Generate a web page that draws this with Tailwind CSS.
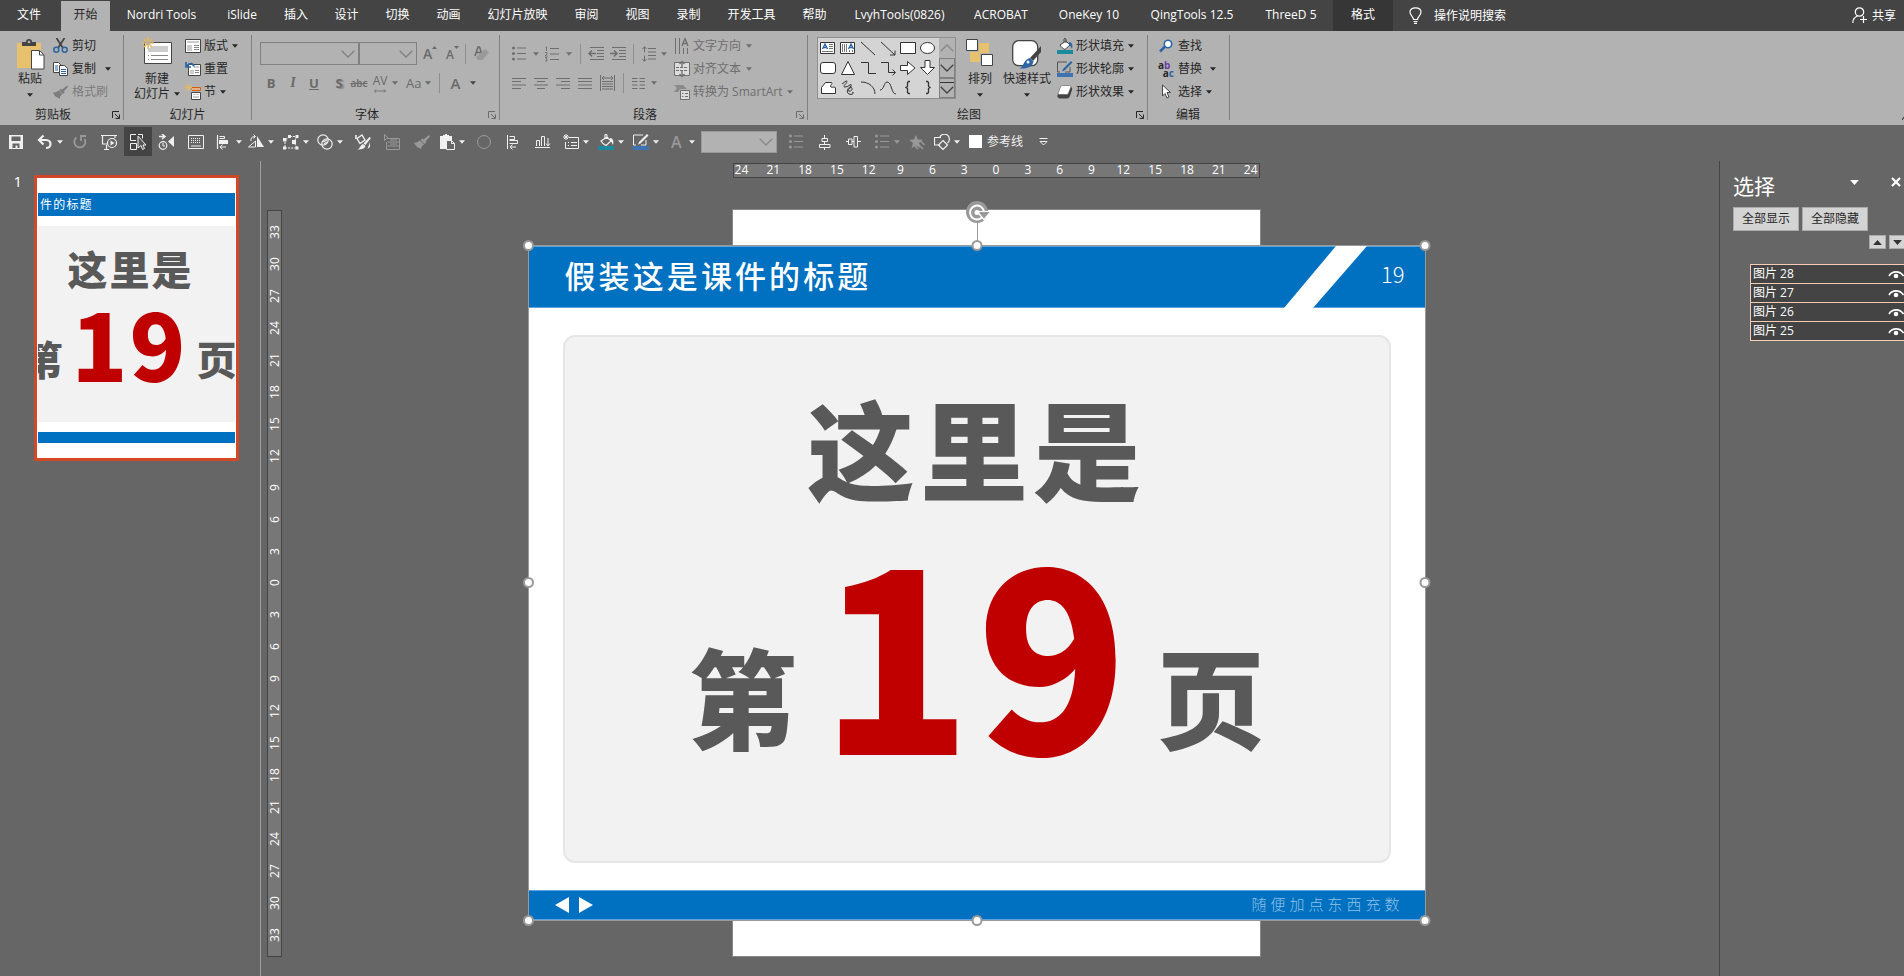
<!DOCTYPE html>
<html lang="zh-CN">
<head>
<meta charset="utf-8">
<title>演示文稿</title>
<script src="https://cdn.jsdelivr.net/npm/@tailwindcss/browser@4"></script>
</head>
<body class="flex h-screen flex-col overflow-hidden bg-[#666666] font-['Open_Sans','Noto_Sans_CJK_SC',sans-serif] text-xs leading-none text-[#262626]">

<svg class="hidden" aria-hidden="true">
  <symbol id="down" viewBox="0 0 7 4"><path d="M0 0h7L3.500 4z" fill="currentColor"/></symbol>
  <symbol id="chev" viewBox="0 0 14 8"><path d="M.7 .7L7 7L13.300 .7" fill="none" stroke="currentColor" stroke-width="1.300"/></symbol>
  <symbol id="launch" viewBox="0 0 8 8"><path d="M.5 7V.5H7M3 3l4 4M7.500 3.500v4h-4" fill="none" stroke="currentColor"/></symbol>
  <symbol id="bul" viewBox="0 0 14 15"><path d="M5 2h9M5 7.500h9M5 13h9" stroke="currentColor" stroke-width="1.200"/><g fill="currentColor"><circle cx="1.500" cy="2" r="1.500"/><circle cx="1.500" cy="7.500" r="1.500"/><circle cx="1.500" cy="13" r="1.500"/></g></symbol>
  <symbol id="brush" viewBox="0 0 16 14"><path d="M15 0l1 1.500-4.500 5-2-2zM8.500 3.500l4 4-2 1.500-4-4zM6 5.500L10 9.500C8 11 7 12 7.500 14 4 13 1 11 0 7.500c2 .5 4-.5 6-2z" fill="currentColor"/></symbol>
  <symbol id="pastes" viewBox="0 0 16 16"><path d="M1 2h3V1h2V0h2v1h2v1h3v4H9v9H1z" fill="currentColor"/><path d="M7.500 6.500h5l3 3v6h-8zM12.500 6.500v3h3" fill="#666" stroke="currentColor"/></symbol>
  <symbol id="eye" viewBox="0 0 16 9"><path d="M1 6C4 .5 12 .5 15.500 6" fill="none" stroke="currentColor" stroke-width="1.600"/><circle cx="8" cy="6" r="2.300" fill="currentColor"/></symbol>
</svg>

<!-- Ribbon tabs -->
<header class="flex h-[31px] shrink-0 bg-[#444444] text-white">
  <nav class="flex" aria-label="功能区选项卡">
    <button class="w-[58px] pb-px">文件</button>
    <button class="mt-px ml-[3px] w-[49px] bg-[#b2b2b2] pb-[2px] text-[#262626]">开始</button>
    <button class="w-[103px] pb-px">Nordri Tools</button>
    <button class="w-[58px] pb-px">iSlide</button>
    <button class="w-[50px] pb-px">插入</button>
    <button class="w-[51px] pb-px">设计</button>
    <button class="w-[51px] pb-px">切换</button>
    <button class="w-[51px] pb-px">动画</button>
    <button class="w-[87px] pb-px">幻灯片放映</button>
    <button class="w-[51px] pb-px">审阅</button>
    <button class="w-[51px] pb-px">视图</button>
    <button class="w-[51px] pb-px">录制</button>
    <button class="w-[75px] pb-px">开发工具</button>
    <button class="w-[51px] pb-px">帮助</button>
    <button class="w-[119px] pb-px">LvyhTools(0826)</button>
    <button class="w-[84px] pb-px">ACROBAT</button>
    <button class="w-[92px] pb-px">OneKey 10</button>
    <button class="w-[114px] pb-px">QingTools 12.5</button>
    <button class="w-[84px] pb-px">ThreeD 5</button>
    <button class="w-[60px] bg-[#363636] pb-px">格式</button>
  </nav>
  <button class="ml-4 flex items-center gap-3">
    <svg class="h-[17px] w-[13px]" viewBox="0 0 13 17" fill="none" stroke="#fff" stroke-width="1.200"><path d="M4.500 12.500c0-3-3.500-4-3.500-7.500C1 2.500 3 .8 6.500 .8S12 2.500 12 5c0 3.500-3.500 4.500-3.500 7.500zM4.500 14.500h4M5 16.300h3"/></svg>
    操作说明搜索
  </button>
  <button class="mr-2 ml-auto flex items-center gap-1">
    <svg class="h-[17px] w-4" viewBox="0 0 16 17" fill="none" stroke="#fff" stroke-width="1.200"><circle cx="7.500" cy="5" r="4.200"/><path d="M.8 16c0-4 2-6 4.700-7M11.500 9v7M8 12.500h7"/></svg>
    共享
  </button>
</header>

<!-- Ribbon -->
<section class="flex h-[94px] shrink-0 bg-[#b2b2b2] pt-1 pb-[5px]" aria-label="功能区">

  <div class="flex w-[124px] flex-col border-r border-[#808080]">
    <div class="flex h-[72px] shrink-0">
      <button class="ml-[15px] flex w-[30px] flex-col items-center pt-1">
        <svg class="h-[31px] w-[30px]" viewBox="0 0 30 31"><path d="M2 4h24v25H2z" fill="#e8c16e"/><path d="M7 3h4a3 3 0 0 1 6 0h4v4H7z" fill="#444"/><circle cx="14" cy="3" r="1.300" fill="#b2b2b2"/><path d="M16.500 11.500h8l4.500 4.500v14H16.500z" fill="#fff" stroke="#444"/><path d="M24.500 11.500V16H29" fill="none" stroke="#444"/></svg>
        <span class="mt-[3px]">粘贴</span>
        <svg class="mt-2 h-1 w-[6px]"><use href="#down"/></svg>
      </button>
      <div class="-mt-px ml-2">
        <button class="flex h-[23px] items-center gap-1">
          <svg class="h-[15px] w-[15px]" viewBox="0 0 15 15" fill="none"><path d="M3.500 0L10 10M11.500 0L5 10" stroke="#444" stroke-width="1.800"/><circle cx="3.300" cy="11.700" r="2.500" stroke="#2b65a5" stroke-width="1.500"/><circle cx="11.700" cy="11.700" r="2.500" stroke="#2b65a5" stroke-width="1.500"/></svg>剪切
        </button>
        <button class="flex h-[23px] items-center gap-1">
          <svg class="h-[14px] w-[15px]" viewBox="0 0 15 14"><path d="M.5 .5h5l2.500 2.500v7.500H.5z" fill="#fff" stroke="#444"/><path d="M2 4h3M2 6h3M2 8h3" stroke="#2b65a5"/><path d="M6.500 3.500h5l3 3v7h-8z" fill="#fff" stroke="#444"/><path d="M8 7.500h5M8 9.500h5M8 11.500h5" stroke="#2b65a5"/></svg>复制
          <svg class="ml-[5px] h-1 w-[6px]"><use href="#down"/></svg>
        </button>
        <button class="flex h-[23px] items-center gap-1 text-[#7c7c7c]">
          <svg class="h-[14px] w-[15px]"><use href="#brush"/></svg>格式刷
        </button>
      </div>
    </div>
    <div class="flex h-[15px] shrink-0 items-center"><span class="flex-1 text-center">剪贴板</span><svg class="mr-[3px] ml-[6px] h-2 w-2"><use href="#launch"/></svg></div>
  </div>

  <div class="flex w-[128px] flex-col border-r border-[#808080]">
    <div class="flex h-[72px] shrink-0">
      <button class="ml-[10px] flex w-[46px] flex-col items-center pt-[2px]">
        <svg class="h-[28px] w-[31px]" viewBox="0 0 31 28"><path d="M2.500 5.500h27v21h-27z" fill="#fff" stroke="#444"/><path d="M11 9h15v6H6v-3z" fill="#ccc"/><path d="M6 18.500h1M9 18.500h17M6 22.500h1M9 22.500h17" stroke="#888"/><path d="M6 0v12M0 6h12M2 2l8 8M10 2l-8 8" stroke="#e8b95c" stroke-width="1.600"/><circle cx="6" cy="6" r="2" fill="#b2b2b2"/></svg>
        <span class="mt-2">新建</span>
        <span class="mt-[3px] flex items-center gap-1 whitespace-nowrap">幻灯片<svg class="h-1 w-[6px]"><use href="#down"/></svg></span>
      </button>
      <div class="-mt-px ml-[5px]">
        <button class="flex h-[23px] items-center gap-[3px]">
          <svg class="h-[14px] w-4" viewBox="0 0 16 14"><path d="M.5 .5h15v13H.5z" fill="#fff" stroke="#444"/><path d="M2 2h12v2H2zM2 6h5v6H2z" fill="#ccc"/><path d="M9 6.500h5M9 8.500h5M9 10.500h5" stroke="#888"/></svg>版式
          <svg class="ml-px h-1 w-[6px]"><use href="#down"/></svg>
        </button>
        <button class="flex h-[23px] items-center gap-[3px]">
          <svg class="h-[14px] w-4" viewBox="0 0 16 14"><path d="M3.500 2.500h12v11h-12z" fill="#fff" stroke="#444"/><path d="M9 4h5v2H9zM5 8h4v4H5z" fill="#ccc"/><path d="M10 8.500h4M10 10.500h4" stroke="#888"/><path d="M9 4.500C8 1 4 .5 2 4M1 0v5h5" fill="none" stroke="#2b65a5" stroke-width="1.700"/></svg>重置
        </button>
        <button class="flex h-[23px] items-center gap-[3px]">
          <svg class="h-4 w-4" viewBox="0 0 16 16"><path d="M7 3.500h8.500v3H7M15 5H6" fill="#fff" stroke="#d0600f"/><path d="M6.500 8.500h9v7h-9z" fill="#fff" stroke="#444"/><path d="M8 10h6v1H8zM8 12h6v2H8z" fill="#ccc"/><path d="M3 0v7M0 3.500h7M.5 1l5 5M5.500 1l-5 5" stroke="#e8b95c"/></svg>节
          <svg class="ml-px h-1 w-[6px]"><use href="#down"/></svg>
        </button>
      </div>
    </div>
    <div class="flex h-[15px] shrink-0 items-center justify-center">幻灯片</div>
  </div>

  <div class="flex w-[248px] flex-col border-r border-[#808080] text-[#6a6a6a]">
    <div class="flex h-[72px] shrink-0 flex-col gap-2 pt-[7px]">
      <div class="flex h-[23px] items-center pl-2">
        <label class="relative flex h-[23px] w-[99px]"><select aria-label="字体" disabled class="h-full w-full appearance-none border border-[#808080]"><option></option></select><svg class="absolute top-2 right-1 h-2 w-[14px] text-[#808080]"><use href="#chev"/></svg></label>
        <label class="relative flex h-[23px] w-[58px]"><select aria-label="字号" disabled class="h-full w-full appearance-none border border-[#808080]"><option></option></select><svg class="absolute top-2 right-1 h-2 w-[14px] text-[#808080]"><use href="#chev"/></svg></label>
        <button class="ml-[6px] flex w-4 items-center" aria-label="增大字号"><span class="text-sm font-semibold">A</span><svg class="mb-3 h-[3px] w-[5px] rotate-180"><use href="#down"/></svg></button>
        <button class="ml-[7px] flex w-4 items-center" aria-label="减小字号"><span class="pt-[2px] text-xs font-semibold">A</span><svg class="mb-3 h-[3px] w-[5px]"><use href="#down"/></svg></button>
        <i class="ml-[3px] h-5 w-px bg-[#8f8f8f]"></i>
        <button class="ml-2" aria-label="清除格式"><svg class="h-4 w-[15px]" viewBox="0 0 15 16"><path d="M1 10L4 1h1.500l2 6M2.500 6.500h4" fill="none" stroke="#6a6a6a" stroke-width="1.500"/><path d="M11 3l4 3.500-6.500 7.500H4l-2-2.500z" fill="#999"/></svg></button>
      </div>
      <div class="flex h-5 items-center pl-[11px] text-[13px]">
        <button class="w-4 font-bold">B</button>
        <button class="ml-[6px] w-4 font-['Liberation_Serif',serif] text-sm font-bold italic">I</button>
        <button class="ml-[5px] w-4 font-bold underline">U</button>
        <button class="ml-[9px] w-4 font-bold text-shadow-[2px_1px_1px_#8a8a8a]">S</button>
        <button class="ml-[2px] w-5 text-[10px] font-semibold line-through">abc</button>
        <button class="ml-[3px] flex items-center gap-1" aria-label="字符间距"><span class="flex flex-col items-center text-xs">AV<svg class="h-1 w-4" viewBox="0 0 16 5"><path d="M1 2.500h14M3 .5l-2 2 2 2M13 .5l2 2-2 2" fill="none" stroke="currentColor"/></svg></span><svg class="h-1 w-[6px]"><use href="#down"/></svg></button>
        <button class="ml-2 flex items-center gap-1">Aa<svg class="h-1 w-[6px]"><use href="#down"/></svg></button>
        <i class="ml-2 h-5 w-px bg-[#8f8f8f]"></i>
        <button class="ml-[10px] flex items-center gap-[10px] text-[15px] font-semibold">A<svg class="h-1 w-[6px] text-[#444]"><use href="#down"/></svg></button>
      </div>
    </div>
    <div class="flex h-[15px] shrink-0 items-center"><span class="flex-1 text-center text-[#262626]">字体</span><svg class="mr-[3px] ml-[6px] h-2 w-2"><use href="#launch"/></svg></div>
  </div>

  <div class="flex w-[308px] flex-col border-r border-[#808080] text-[#6e6e6e]">
    <div class="flex h-[72px] shrink-0">
      <div class="flex w-[174px] flex-col gap-2 pt-[7px] pl-3">
        <div class="flex h-[23px] items-center">
          <button class="flex items-center gap-[7px]" aria-label="项目符号"><svg class="h-[15px] w-[14px]"><use href="#bul"/></svg><svg class="h-1 w-[6px]"><use href="#down"/></svg></button>
          <button class="ml-[6px] flex items-center gap-[7px]" aria-label="编号"><svg class="h-4 w-[14px]" viewBox="0 0 14 16"><path d="M5 2.500h9M5 8h9M5 13.500h9" stroke="currentColor"/><path d="M.5 1h1v4M0 6.500h2v1.500l-2 2h2.500M0 11.500h2l-1 1.500 1 .5v1.500H0" fill="none" stroke="currentColor" stroke-width=".9"/></svg><svg class="h-1 w-[6px]"><use href="#down"/></svg></button>
          <i class="ml-2 h-5 w-px bg-[#8f8f8f]"></i>
          <button class="ml-[7px]" aria-label="减少缩进"><svg class="h-[13px] w-4" viewBox="0 0 16 13"><path d="M2 .5h14M9 3.500h7M9 6.500h7M9 9.500h7M2 12.500h14" stroke="currentColor"/><path d="M1 6.500h7M4 3.500l-3 3 3 3" fill="none" stroke="currentColor" stroke-width="1.500"/></svg></button>
          <button class="ml-[6px]" aria-label="增加缩进"><svg class="h-[13px] w-4" viewBox="0 0 16 13"><path d="M2 .5h14M9 3.500h7M9 6.500h7M9 9.500h7M2 12.500h14" stroke="currentColor"/><path d="M0 6.500h7M4 3.500l3 3-3 3" fill="none" stroke="currentColor" stroke-width="1.500"/></svg></button>
          <i class="ml-[7px] h-5 w-px bg-[#8f8f8f]"></i>
          <button class="ml-2 flex items-center gap-[5px]" aria-label="行距"><svg class="h-4 w-[14px]" viewBox="0 0 14 16"><path d="M6 2.500h8M6 6h8M6 9.500h8M6 13h8" stroke="currentColor"/><path d="M2.500 1v5.500M2.500 9.500V15M.5 3l2-2.300L4.500 3M.5 13l2 2.300 2-2.300" fill="none" stroke="currentColor"/></svg><svg class="h-1 w-[6px]"><use href="#down"/></svg></button>
        </div>
        <div class="flex h-5 items-center gap-2">
          <button aria-label="左对齐"><svg class="h-[11px] w-[14px]" viewBox="0 0 14 11"><path d="M0 .5h14M0 3.500h9M0 7h14M0 10.500h9" stroke="currentColor"/></svg></button>
          <button aria-label="居中"><svg class="h-[11px] w-[14px]" viewBox="0 0 14 11"><path d="M0 .5h14M3 3.500h8M0 7h14M3 10.500h8" stroke="currentColor"/></svg></button>
          <button aria-label="右对齐"><svg class="h-[11px] w-[14px]" viewBox="0 0 14 11"><path d="M0 .5h14M5 3.500h9M0 7h14M5 10.500h9" stroke="currentColor"/></svg></button>
          <button aria-label="两端对齐"><svg class="h-[11px] w-[14px]" viewBox="0 0 14 11"><path d="M0 .5h14M0 3.500h14M0 7h14M0 10.500h14" stroke="currentColor"/></svg></button>
          <button aria-label="分散对齐"><svg class="h-4 w-[15px]" viewBox="0 0 15 16"><path d="M.5 0v16M14.500 0v16M2 6.500h11M2 9h11M2 11.500h11M2 14h11" stroke="currentColor"/><path d="M2 3h11M4 1L2 3l2 2M11 1l2 2-2 2" fill="none" stroke="currentColor"/></svg></button>
          <i class="h-5 w-px bg-[#8f8f8f]"></i>
          <button class="flex items-center gap-[6px]" aria-label="分栏"><svg class="h-[11px] w-[13px]" viewBox="0 0 13 11"><path d="M0 .5h5.500M0 3.500h5.500M0 7h5.500M0 10.500h5.500M7.500 .5H13M7.500 3.500H13M7.500 7H13M7.500 10.500H13" stroke="currentColor"/></svg><svg class="h-1 w-[6px]"><use href="#down"/></svg></button>
        </div>
      </div>
      <div class="-mt-px">
        <button class="flex h-[23px] items-center gap-[3px]">
          <svg class="h-4 w-4" viewBox="0 0 16 16"><path d="M1.500 0v16M5.500 0v16M9.500 10v6M13.500 10v6" stroke="currentColor"/><path d="M8 8l3-7.500L14 8M9 5.500h4" fill="none" stroke="currentColor" stroke-width="1.300"/></svg>文字方向<svg class="ml-[2px] h-1 w-[6px]"><use href="#down"/></svg>
        </button>
        <button class="flex h-[23px] items-center gap-[3px]">
          <svg class="h-4 w-4" viewBox="0 0 16 16"><path d="M.5 1.500h15v13H.5z" fill="#ddd" stroke="currentColor"/><path d="M2 6.500h12M2 9.500h12" stroke="currentColor" stroke-dasharray="3 1"/><path d="M8 0v6M5.500 3L8 .5 10.500 3M8 10v6M5.500 13L8 15.500l2.500-2.500" fill="none" stroke="currentColor" stroke-width="1.300"/></svg>对齐文本<svg class="ml-[2px] h-1 w-[6px]"><use href="#down"/></svg>
        </button>
        <button class="flex h-[23px] items-center gap-[3px]">
          <svg class="h-4 w-4" viewBox="0 0 16 16"><path d="M0 1h9l4 4H6L4 8 0 8l3-4z" fill="#8a8a8a"/><path d="M6.500 6.500h9v9h-9z" fill="#ddd" stroke="currentColor"/><path d="M8 9.500h1.500M11 9.500h3M8 12.500h1.500M11 12.500h3" stroke="currentColor"/></svg>转换为 SmartArt<svg class="ml-[2px] h-1 w-[6px]"><use href="#down"/></svg>
        </button>
      </div>
    </div>
    <div class="flex h-[15px] shrink-0 items-center"><span class="flex-1 text-center text-[#262626]">段落</span><svg class="mr-[3px] ml-[6px] h-2 w-2"><use href="#launch"/></svg></div>
  </div>

  <div class="flex w-[340px] flex-col border-r border-[#808080]">
    <div class="flex h-[72px] shrink-0">
      <div class="mt-[2px] ml-[9px] flex h-[62px] w-[139px] border border-[#8e8e8e] bg-[#d4d4d4]">
        <svg class="h-[60px] w-[121px]" viewBox="0 0 121 60" fill="none" stroke="#333">
          <path d="M2.500 4.500h14v11h-14zM22.500 4.500h14v11h-14z" fill="#fff"/>
          <path d="M4.500 11L7 6l2.500 5M5.500 9.500h3M30.500 11L33 6l2.500 5M31.500 9.500h3" stroke="#2b65a5" stroke-width="1.300"/>
          <path d="M11 6.500h4M11 8.500h4M11 10.500h4M4 13.500h11M24.500 6v8M26.500 6v8M28.500 6v8M31.500 12v2M34.500 12v2" stroke="#777"/>
          <path d="M43 4l14 13M63 4l14 13M77 12.500V17h-5"/>
          <path d="M82.500 4.500h15v11h-15z" fill="#fff"/><ellipse cx="109.500" cy="10" rx="7" ry="5.500" fill="#fff"/>
          <rect x="2.500" y="24.500" width="15" height="11" rx="2.500" fill="#fff"/><path d="M30 23.500l6.500 13h-13z" fill="#fff"/>
          <path d="M43 24.500h7.500v11H58M63 24.500h7.500v10H77M74.500 31.500l3 3-3 3"/>
          <path d="M82.500 27.500h7v-4l7.500 6.500-7.500 6.500v-4h-7zM107 22.500h5v7h4.500l-7 7-7-7h4.500z" fill="#fff"/>
          <path d="M3.500 55.500v-6l4-5h6c2 1-2.500 3-.5 4.500 2 1 4-1 4.500 1v5.500z" fill="#fff"/>
          <path d="M24 46l4-3c4 0-5 6-1 6s7-5 6-1-5 4-2 5 4-3 2-4-6 5-2 7 6-3 3-1"/>
          <path d="M43 44c8 0 14 5 14 12M62 52c4 0 4-8 7-8 5 0 4 12 9 12"/>
          <path d="M92 43.500h-1.500l-1 1v4l-1.500 1 1.500 1v4l1 1H92M108 43.500h1.500l1 1v4l1.500 1-1.500 1v4l-1 1H108" stroke-width="1.300"/>
        </svg>
        <div class="flex w-4 flex-col text-[#444]">
          <button class="grid h-5 w-4 place-items-center bg-[#b2b2b2] text-[#888]" aria-label="向上滚动"><svg class="h-2 w-[14px] rotate-180"><use href="#chev"/></svg></button>
          <button class="grid h-5 w-4 place-items-center border border-[#808080] bg-[#b2b2b2]" aria-label="向下滚动"><svg class="h-2 w-[14px]"><use href="#chev"/></svg></button>
          <button class="flex h-5 w-4 flex-col items-center gap-[3px] border border-[#808080] bg-[#b2b2b2] pt-[3px]" aria-label="其他"><i class="h-px w-[14px] bg-[#333]"></i><svg class="h-2 w-[14px]"><use href="#chev"/></svg></button>
        </div>
      </div>
      <button class="ml-[10px] flex w-7 flex-col items-center pt-1">
        <svg class="h-[27px] w-7" viewBox="0 0 28 27"><path d="M13 4h10v10H13zM4 13h10v10H4z" fill="#e8c16e"/><path d="M.5 .5h11v11H.5zM15.500 15.500h11v11h-11z" fill="#fff" stroke="#444"/></svg>
        <span class="mt-[7px]">排列</span>
        <svg class="mt-2 h-1 w-[6px]"><use href="#down"/></svg>
      </button>
      <button class="ml-2 flex w-[50px] flex-col items-center pt-[5px]">
        <svg class="h-[29px] w-[30px]" viewBox="0 0 30 29"><rect x=".7" y=".7" width="25" height="25" rx="6" fill="#fff" stroke="#444" stroke-width="1.300"/><path d="M29 6v6l-8 9-3-3z" fill="#444"/><path d="M18 18l3.500 3.500c-1 5-5 7.500-14 7 4-1.500 4-9 10.500-10.500z" fill="#2b65a5"/><circle cx="16" cy="22" r="1.500" fill="#fff"/></svg>
        <span class="mt-1 whitespace-nowrap">快速样式</span>
        <svg class="mt-2 h-1 w-[6px]"><use href="#down"/></svg>
      </button>
      <div class="-mt-px ml-[5px]">
        <button class="flex h-[23px] items-center gap-[3px]"><svg class="h-4 w-4" viewBox="0 0 16 16"><path d="M0 12h16v4H0z" fill="#1a8a9c"/><path d="M3 7l6-4 4 4-5 4.500c-2-1-4-2.500-5-4.500z" fill="#fff" stroke="#444"/><path d="M7 4V1c1-1.500 2-.5 2 1v3" fill="none" stroke="#444"/><path d="M12 4c3 0 4 3 3 7-1-2-1-3-3-4z" fill="#2b65a5"/></svg>形状填充<svg class="ml-px h-1 w-[6px]"><use href="#down"/></svg></button>
        <button class="flex h-[23px] items-center gap-[3px]"><svg class="h-4 w-4" viewBox="0 0 16 16"><path d="M0 12h16v4H0z" fill="#3f73b3"/><path d="M10 1H.5v10H3M13 6v5H8" fill="none" stroke="#555"/><path d="M14 0l1.500 1.500-8 8-2.500 1 1-2.500z" fill="#2b65a5"/></svg>形状轮廓<svg class="ml-px h-1 w-[6px]"><use href="#down"/></svg></button>
        <button class="flex h-[23px] items-center gap-[3px]"><svg class="h-4 w-4" viewBox="0 0 16 16"><path d="M5 3h8c2 0 2.500 1 2 3l-2 6c-.5 1.500-1.500 2.500-3 2.500H3c-2 0-3-2-2.500-3.500z" fill="#444"/><path d="M5.500 1.500h7c1.200 0 1.700 1 1.200 2L11.500 9c-.4 1-1 1.500-2 1.500h-7c-1.200 0-1.700-1-1.200-2L3.500 3c.4-1 1-1.500 2-1.500z" fill="#fff" stroke="#555" stroke-width=".6"/></svg>形状效果<svg class="ml-px h-1 w-[6px]"><use href="#down"/></svg></button>
      </div>
    </div>
    <div class="flex h-[15px] shrink-0 items-center"><span class="flex-1 text-center">绘图</span><svg class="mr-[3px] ml-[6px] h-2 w-2"><use href="#launch"/></svg></div>
  </div>

  <div class="flex w-[82px] flex-col border-r border-[#808080]">
    <div class="-mt-px h-[73px] shrink-0 pl-[10px]">
      <button class="flex h-[23px] items-center gap-1"><svg class="h-[14px] w-4" viewBox="0 0 16 14"><circle cx="10" cy="5" r="3.700" fill="#fff" stroke="#2b65a5" stroke-width="1.600"/><path d="M7 7.500L2 12.500" stroke="#2b65a5" stroke-width="2.500"/></svg>查找</button>
      <button class="flex h-[23px] items-center gap-1"><span class="flex h-4 w-4 flex-col text-[10px] leading-[8px] font-bold"><span class="text-left">a<span class="text-[#6b3fa0]">b</span></span><span class="text-right">a<span class="text-[#2b65a5]">c</span></span></span>替换<svg class="ml-1 h-1 w-[6px]"><use href="#down"/></svg></button>
      <button class="flex h-[23px] items-center gap-1"><svg class="h-[15px] w-4" viewBox="0 0 16 15"><path d="M4.500 1v11l2.500-2.500 2 4.500 2-1-2-4.500h3.500z" fill="#fff" stroke="#444"/></svg>选择<svg class="h-1 w-[6px]"><use href="#down"/></svg></button>
    </div>
    <div class="flex h-[15px] shrink-0 items-center pl-7">编辑</div>
  </div>

  <button class="mt-auto ml-auto" aria-label="折叠功能区"><svg class="h-[3px] w-[2px]" viewBox="0 0 2 3"><path d="M0 3l2-3" stroke="#222"/></svg></button>
</section>

<!-- Quick access toolbar -->
<section class="flex h-[35px] shrink-0 items-center pb-[2px] pl-2 text-[#f0f0f0]" aria-label="快速访问工具栏">
  <button aria-label="保存"><svg class="h-4 w-4" viewBox="0 0 16 16"><path d="M1 1h14v14H1z" fill="currentColor"/><path d="M3.500 2.500h9v4.500h-9zM4.500 9.500h7V14h-2v-2.500h-2V14h-3z" fill="#666"/></svg></button>
  <button class="ml-[13px] flex items-center gap-1" aria-label="撤消"><svg class="h-4 w-4" viewBox="0 0 16 16"><path d="M2 6h7c6 0 6 8 0 8M6.500 1.500L2 6l4.500 4.500" fill="none" stroke="currentColor" stroke-width="2.200"/></svg><svg class="h-1 w-[6px]"><use href="#down"/></svg></button>
  <button class="ml-[9px] text-[#9a9a9a]" aria-label="恢复"><svg class="h-4 w-4" viewBox="0 0 16 16"><path d="M4.500 3.500a5.500 5.500 0 1 0 8 1.500M9 7V2h5" fill="none" stroke="currentColor" stroke-width="1.800"/></svg></button>
  <button class="ml-[13px]" aria-label="从头放映"><svg class="h-4 w-4" viewBox="0 0 16 16"><path d="M0 1.500h16M1.500 2v8H6M14 2v2M5.500 11v4M3 15.500h5" fill="none" stroke="currentColor" stroke-width="1.200"/><circle cx="11" cy="9" r="4.500" fill="#666" stroke="currentColor" stroke-width="1.200"/><path d="M9.500 6.500v5l4-2.500z" fill="currentColor"/></svg></button>
  <button class="ml-[7px] grid h-[29px] w-7 place-items-center bg-[#444444]" aria-label="选择窗格"><svg class="h-4 w-4" viewBox="0 0 16 16" fill="none"><path d="M6 .5H.5v6H6M6.500 9.500h-6v6h6zM8 .5h4.500v4" stroke="currentColor"/><path d="M8 2v12l3-2.500 1.500 4 2-1-1.500-3.500h3z" fill="#555" stroke="currentColor"/></svg></button>
  <button class="ml-[6px]" aria-label="动画窗格"><svg class="h-4 w-4" viewBox="0 0 16 16"><path d="M16 2v11l-6-5.500z" fill="currentColor"/><path d="M1 2.500h5M4 0l3 2.500L4 5" fill="none" stroke="currentColor" stroke-width="1.600"/><circle cx="5" cy="11.500" r="3.800" fill="none" stroke="currentColor" stroke-width="1.200"/><path d="M5 9v3h2" fill="none" stroke="currentColor"/></svg></button>
  <button class="ml-[14px]" aria-label="备注"><svg class="h-4 w-4" viewBox="0 0 16 16"><path d="M.5 1.500h15v13H.5zM3 12h10" fill="none" stroke="currentColor"/><path d="M3 4.500h10M3 6.500h10M3 8.500h10" stroke="currentColor" stroke-dasharray="1 1"/></svg></button>
  <button class="ml-3 flex items-center gap-1" aria-label="对齐"><svg class="h-4 w-4" viewBox="0 0 16 16"><path d="M1.500 1v14" stroke="currentColor" stroke-width="1.200"/><path d="M3 6h9v4H3z" fill="currentColor"/><path d="M3.500 2.500h5v2h-5M10 13H4M6.500 10.500L4 13l2.500 2.500" fill="none" stroke="currentColor"/></svg><svg class="h-1 w-[6px]"><use href="#down"/></svg></button>
  <button class="ml-[6px] flex items-center gap-1" aria-label="旋转"><svg class="h-4 w-4" viewBox="0 0 16 16"><path d="M9 2v11h7z" fill="currentColor"/><path d="M7.500 7v6H.5zM3 7C2.500 4 4 2.500 7 2.500M5.500 .5l2 2-2 2" fill="none" stroke="currentColor"/></svg><svg class="h-1 w-[6px]"><use href="#down"/></svg></button>
  <button class="ml-[9px] flex items-center gap-1" aria-label="编辑顶点"><svg class="h-4 w-4" viewBox="0 0 16 16"><path d="M2 6L7 2.500h7L11 8l3 6H2z" fill="none" stroke="currentColor" stroke-dasharray="2 1"/><path d="M0 4h3.500v3.500H0zM5 1h3v3H5zM12.500 1h3v3h-3zM9 6h4v4H9zM0 12.500h3v3H0zM12.500 12.500h3v3h-3z" fill="currentColor"/></svg><svg class="h-1 w-[6px]"><use href="#down"/></svg></button>
  <button class="ml-2 flex items-center gap-1" aria-label="合并形状"><svg class="h-4 w-4" viewBox="0 0 16 16" fill="none" stroke="currentColor" stroke-width="1.200"><circle cx="6" cy="6" r="5.200"/><circle cx="10" cy="10" r="5.200"/><path d="M6 8l4-2M7 10l3-2"/></svg><svg class="h-1 w-[6px]"><use href="#down"/></svg></button>
  <button class="ml-3" aria-label="格式填充"><svg class="h-4 w-4" viewBox="0 0 16 16"><path d="M2 4.500l5-3.500 3 5-5 3.500z" fill="none" stroke="currentColor" stroke-width="1.400"/><path d="M1 1v4" stroke="currentColor" stroke-width="1.600"/><path d="M16 4l-5.500 7-2-1.500L14.500 3zM8 10l2.500 2c-1 3-4 3.700-8 3.500 3-1 2.500-4.500 5.500-5.500zM15 8v5l-2.500 2z" fill="currentColor"/></svg></button>
  <button class="ml-[13px] text-[#999]" aria-label="列表"><svg class="h-4 w-4" viewBox="0 0 16 16" fill="none" stroke="currentColor"><path d="M3 4.500h12.500v11H2.500V8M3.500 8h12M3.500 12h12M.5 .5v6l3-3zM6 6h7M6 10h7"/></svg></button>
  <button class="ml-[14px] text-[#999]" aria-label="格式刷"><svg class="h-4 w-4"><use href="#brush"/></svg></button>
  <button class="ml-[9px] flex items-center gap-1" aria-label="粘贴"><svg class="h-4 w-4"><use href="#pastes"/></svg><svg class="h-1 w-[6px]"><use href="#down"/></svg></button>
  <button class="ml-[11px] text-[#999]" aria-label="圆形"><svg class="h-4 w-4" viewBox="0 0 16 16"><circle cx="8" cy="8" r="6.500" fill="none" stroke="currentColor"/></svg></button>
  <button class="ml-[14px]" aria-label="左对齐"><svg class="h-4 w-4" viewBox="0 0 16 16" fill="none" stroke="currentColor"><path d="M1.500 1v14M3.500 2.500h5v3h-5M3.500 6.500h8v3h-8M10 13H4M6.500 10.500L4 13l2.500 2.500"/></svg></button>
  <button class="ml-[13px]" aria-label="底端对齐"><svg class="h-4 w-4" viewBox="0 0 16 16" fill="none" stroke="currentColor"><path d="M0 13.500h15M1.500 12V6.500h3V12M6.500 12V2.500h3V12M13 4v8M11 9.500l2 2.500 2-2.500"/></svg></button>
  <button class="ml-3 flex items-center gap-1" aria-label="新建文本"><svg class="h-4 w-4" viewBox="0 0 16 16" fill="none" stroke="currentColor"><path d="M6 3.500h9.500v11h-13V8M5 8.500h1M8 8.500h6M5 11.500h1M8 11.500h6M3 0v6M0 3h6M1 1l4 4M5 1L1 5"/></svg><svg class="h-1 w-[6px]"><use href="#down"/></svg></button>
  <button class="ml-[9px] flex items-center gap-1" aria-label="填充"><svg class="h-4 w-4" viewBox="0 0 16 16"><path d="M0 12h16v4H0z" fill="#1a8a9c"/><path d="M3 7l6-4 4 4-5 4.500c-2-1-4-2.500-5-4.500zM7 4V1c1-1.500 2-.5 2 1v3" fill="none" stroke="currentColor" stroke-width="1.200"/><path d="M12 4c3 0 4 3 3 7-1-2-1-3-3-4z" fill="currentColor"/></svg><svg class="h-1 w-[6px]"><use href="#down"/></svg></button>
  <button class="ml-[9px] flex items-center gap-1" aria-label="轮廓"><svg class="h-4 w-4" viewBox="0 0 16 16"><path d="M0 12h16v4H0z" fill="#3f73b3"/><path d="M10 1H.5v10H3M13 6v5H8" fill="none" stroke="currentColor"/><path d="M14 0l1.500 1.500-8 8-2.500 1 1-2.500z" fill="currentColor"/></svg><svg class="h-1 w-[6px]"><use href="#down"/></svg></button>
  <button class="ml-3 flex items-center gap-1" aria-label="字体颜色"><span class="w-[14px] text-left text-base font-semibold text-[#999]">A</span><svg class="h-1 w-[6px]"><use href="#down"/></svg></button>
  <label class="relative ml-[6px] flex h-[22px] w-[76px]"><select aria-label="样式" disabled class="h-full w-full appearance-none border border-[#999] bg-[#b2b2b2]"><option></option></select><svg class="absolute top-[7px] right-1 h-2 w-[14px] text-[#888]"><use href="#chev"/></svg></label>
  <button class="ml-[11px] text-[#999]" aria-label="项目符号"><svg class="h-[15px] w-4"><use href="#bul"/></svg></button>
  <button class="ml-[13px]" aria-label="水平居中"><svg class="h-4 w-4" viewBox="0 0 16 16" fill="none" stroke="currentColor"><path d="M7.500 1v3M7.500 8v3M7.500 14v2M5 4.500h5.500v3H5zM2.500 10.500h10.500v3H2.500z"/></svg></button>
  <button class="ml-[13px]" aria-label="垂直居中"><svg class="h-4 w-4" viewBox="0 0 16 16" fill="none" stroke="currentColor"><path d="M0 7.500h2.500M6 7.500h2M11.500 7.500H15M2.500 5h3.500v5.500H2.500zM8 2.500h3.500v10.500H8z"/></svg></button>
  <button class="ml-3 flex items-center gap-1 text-[#999]" aria-label="项目符号库"><svg class="h-[15px] w-4"><use href="#bul"/></svg><svg class="h-1 w-[6px]"><use href="#down"/></svg></button>
  <button class="ml-[9px] text-[#999]" aria-label="动画"><svg class="h-4 w-4" viewBox="0 0 16 16"><path d="M7 1l1.800 4.500 5 .3L10 9l1.200 5L7 11.500 2.500 14l1.500-5L0 5.800l5-.3z" fill="currentColor"/><path d="M8 9l6 6M10.500 6l5 5M6 12l3 3" stroke="currentColor" stroke-width="1.500"/></svg></button>
  <button class="ml-[9px] flex items-center gap-1" aria-label="形状"><svg class="h-4 w-4" viewBox="0 0 16 16" fill="none" stroke="currentColor" stroke-width="1.200"><path d="M6 11H.5V3.500H7"/><path d="M5.500 4a5 5 0 1 1 8 5"/><path d="M9 6.500l4.500 4.500L9 15.500 4.500 11z"/></svg><svg class="h-1 w-[6px]"><use href="#down"/></svg></button>
  <label class="ml-[9px] flex items-center gap-[5px]"><input type="checkbox" class="h-[13px] w-[13px] appearance-none bg-white">参考线</label>
  <button class="ml-4" aria-label="自定义快速访问工具栏"><svg class="h-2 w-[9px]" viewBox="0 0 9 8"><path d="M.5 .5h8M1 3.500h7L4.500 7z" fill="none" stroke="currentColor"/></svg></button>
</section>

<!-- Workspace -->
<main class="flex min-h-0 flex-1">

  <aside class="mt-px flex w-[261px] shrink-0 items-start border-r border-[#a0a0a0] pt-[14px] text-white" aria-label="幻灯片缩略图">
    <span class="w-[34px] pr-3 text-right text-[15px] leading-3">1</span>
    <button class="flex h-[286px] w-[205px] flex-col border-[3px] border-[#d24726] bg-white px-px pt-[15px]" aria-label="幻灯片 1">
      <span class="flex h-[250px] w-full flex-col overflow-hidden">
        <span class="flex h-[23px] items-center bg-[#0070c0] pb-[2px] pl-[2px] font-['Noto_Sans_CJK_SC',sans-serif] text-xs tracking-widest">件的标题</span>
        <span class="mt-[10px] flex h-[196px] flex-col items-center bg-[#f2f2f2] pr-[14px] font-['Noto_Sans_CJK_SC',sans-serif] text-[40px] font-black text-[#595959]">
          <span class="pt-[22px] pl-[2px] tracking-[2px]">这里是</span>
          <span class="mt-2 flex items-end gap-[9px] whitespace-nowrap"><span class="pb-[10px]">第</span><b class="text-[92px] leading-none font-black tracking-[2px] text-[#c00000]">19</b><span class="pb-[10px]">页</span></span>
        </span>
        <span class="mt-[10px] h-[11px] bg-[#0070c0]"></span>
      </span>
    </button>
  </aside>

  <section class="flex min-w-0 flex-1 pl-[6px] text-white" aria-label="编辑区">
    <div class="mt-[50px] flex h-[747px] w-[15px] shrink-0 flex-col border border-[#444] bg-[#777777] py-[5px]">
      <span class="grid flex-1 rotate-180 place-items-center [writing-mode:vertical-rl]">33</span>
      <span class="grid flex-1 rotate-180 place-items-center [writing-mode:vertical-rl]">30</span>
      <span class="grid flex-1 rotate-180 place-items-center [writing-mode:vertical-rl]">27</span>
      <span class="grid flex-1 rotate-180 place-items-center [writing-mode:vertical-rl]">24</span>
      <span class="grid flex-1 rotate-180 place-items-center [writing-mode:vertical-rl]">21</span>
      <span class="grid flex-1 rotate-180 place-items-center [writing-mode:vertical-rl]">18</span>
      <span class="grid flex-1 rotate-180 place-items-center [writing-mode:vertical-rl]">15</span>
      <span class="grid flex-1 rotate-180 place-items-center [writing-mode:vertical-rl]">12</span>
      <span class="grid flex-1 rotate-180 place-items-center [writing-mode:vertical-rl]">9</span>
      <span class="grid flex-1 rotate-180 place-items-center [writing-mode:vertical-rl]">6</span>
      <span class="grid flex-1 rotate-180 place-items-center [writing-mode:vertical-rl]">3</span>
      <span class="grid flex-1 rotate-180 place-items-center [writing-mode:vertical-rl]">0</span>
      <span class="grid flex-1 rotate-180 place-items-center [writing-mode:vertical-rl]">3</span>
      <span class="grid flex-1 rotate-180 place-items-center [writing-mode:vertical-rl]">6</span>
      <span class="grid flex-1 rotate-180 place-items-center [writing-mode:vertical-rl]">9</span>
      <span class="grid flex-1 rotate-180 place-items-center [writing-mode:vertical-rl]">12</span>
      <span class="grid flex-1 rotate-180 place-items-center [writing-mode:vertical-rl]">15</span>
      <span class="grid flex-1 rotate-180 place-items-center [writing-mode:vertical-rl]">18</span>
      <span class="grid flex-1 rotate-180 place-items-center [writing-mode:vertical-rl]">21</span>
      <span class="grid flex-1 rotate-180 place-items-center [writing-mode:vertical-rl]">24</span>
      <span class="grid flex-1 rotate-180 place-items-center [writing-mode:vertical-rl]">27</span>
      <span class="grid flex-1 rotate-180 place-items-center [writing-mode:vertical-rl]">30</span>
      <span class="grid flex-1 rotate-180 place-items-center [writing-mode:vertical-rl]">33</span>
    </div>

    <div class="flex flex-1 flex-col items-center pt-[3px] pr-[9px]">
      <div class="h-[15px] w-[527px] border border-[#444] bg-[#777777]">
        <div class="-mx-2 flex h-full items-center pb-px text-center">
          <span class="flex-1">24</span><span class="flex-1">21</span><span class="flex-1">18</span><span class="flex-1">15</span><span class="flex-1">12</span><span class="flex-1">9</span><span class="flex-1">6</span><span class="flex-1">3</span><span class="flex-1">0</span><span class="flex-1">3</span><span class="flex-1">6</span><span class="flex-1">9</span><span class="flex-1">12</span><span class="flex-1">15</span><span class="flex-1">18</span><span class="flex-1">21</span><span class="flex-1">24</span>
        </div>
      </div>

      <!-- Slide with the selected picture lying over it -->
      <div class="relative mt-[31px] h-[748px] w-[529px] border border-[#888] bg-white">
        <div class="absolute top-[35px] -left-[205px] flex h-[676px] w-[898px] flex-col border border-[#999] bg-white font-['Noto_Sans_CJK_SC',sans-serif]">
          <div class="flex h-[62px] shrink-0 items-center border-y border-[#5ba3da] bg-[#0070c0] pl-9">
            <h1 class="pb-[6px] text-[31px] font-medium tracking-widest">假装这是课件的标题</h1>
            <svg class="ml-auto h-[62px] w-[83px]" viewBox="0 0 83 62"><path d="M52 0h31L29 62H0z" fill="#fff"/></svg>
            <span class="mr-5 ml-[14px] pb-2 text-[22px] font-light">19</span>
          </div>
          <div class="mx-[34px] mt-[27px] flex h-[528px] flex-col items-center rounded-xl border-2 border-[#e6e6e6] bg-[#f2f2f2] text-[108px] font-black text-[#595959]">
            <p class="pt-[55px] tracking-[5px]">这里是</p>
            <p class="mt-[23px] flex items-end gap-6 whitespace-nowrap"><span class="pb-[23px]">第</span><b class="text-[248px] leading-none font-black tracking-[5px] text-[#c00000]">19</b><span class="pb-[23px]">页</span></p>
          </div>
          <div class="mt-auto flex h-[30px] shrink-0 items-center border-y border-[#5ba3da] bg-[#0070c0] pr-[21px] pl-[26px]">
            <svg class="h-4 w-[38px]" viewBox="0 0 38 16" fill="#fff"><path d="M14 0v16L0 8zM24 0l14 8-14 8z"/></svg>
            <span class="ml-auto pb-1 text-[15px] font-light tracking-[4px] text-[#8fc1e8]">随便加点东西充数</span>
          </div>
        </div>
        <!-- Selection handles -->
        <svg class="absolute top-0 -left-[215px] h-[730px] w-[918px] overflow-visible" viewBox="0 0 918 730" fill="none" stroke="#999">
          <path d="M459.500 10v22"/>
          <circle cx="459" cy="2" r="11" fill="#999" stroke="none"/>
          <path d="M464 7.500A7 7 0 1 1 466 2" stroke="#fff" stroke-width="2"/><path d="M459 1.500h14l-7 8z" fill="#999" stroke="#fff" stroke-width="1.200"/><circle cx="459" cy="2.500" r="2.500" fill="#fff" stroke="none"/>
          <g fill="#fff" stroke-width="2"><circle cx="10.500" cy="35.500" r="4.500"/><circle cx="459" cy="35.500" r="4.500"/><circle cx="907" cy="35.500" r="4.500"/><circle cx="10.500" cy="372.500" r="4.500"/><circle cx="907" cy="372.500" r="4.500"/><circle cx="10.500" cy="710.500" r="4.500"/><circle cx="459" cy="710.500" r="4.500"/><circle cx="907" cy="710.500" r="4.500"/></g>
        </svg>
      </div>
    </div>
  </section>

  <aside class="mt-px w-[185px] shrink-0 overflow-hidden border-l border-[#444] pl-[13px] text-white" aria-label="选择窗格">
    <div class="flex h-[46px] items-center pt-1">
      <h2 class="text-[21px]">选择</h2>
      <button class="mb-2 ml-auto" aria-label="任务窗格选项"><svg class="h-[5px] w-[9px]"><use href="#down"/></svg></button>
      <button class="mr-[3px] mb-2 ml-8" aria-label="关闭"><svg class="h-[10px] w-[10px]" viewBox="0 0 10 10"><path d="M1 1l8 8M9 1L1 9" stroke="#fff" stroke-width="2.200"/></svg></button>
    </div>
    <div class="flex gap-[3px] text-[#262626]">
      <button class="h-6 w-[66px] border border-[#ababab] bg-[#d4d4d4]">全部显示</button>
      <button class="h-6 w-[66px] border border-[#ababab] bg-[#d4d4d4]">全部隐藏</button>
    </div>
    <div class="mt-1 ml-[136px] flex w-[40px] gap-[3px] text-[#333]">
      <button class="grid h-[14px] w-[17px] shrink-0 place-items-center border border-[#ababab] bg-[#d4d4d4]" aria-label="上移一层"><svg class="h-[5px] w-[9px] rotate-180"><use href="#down"/></svg></button>
      <button class="grid h-[14px] w-[17px] shrink-0 place-items-center border border-[#ababab] bg-[#d4d4d4]" aria-label="下移一层"><svg class="h-[5px] w-[9px]"><use href="#down"/></svg></button>
    </div>
    <ul class="mt-[15px] ml-[17px] border-t border-l border-[#f8cbb5] bg-[#444444]">
      <li class="flex h-[19px] items-center justify-between border-b border-[#f8cbb5] pl-[2px]">图片 28<button aria-label="隐藏 图片 28"><svg class="h-[9px] w-4"><use href="#eye"/></svg></button></li>
      <li class="flex h-[19px] items-center justify-between border-b border-[#f8cbb5] pl-[2px]">图片 27<button aria-label="隐藏 图片 27"><svg class="h-[9px] w-4"><use href="#eye"/></svg></button></li>
      <li class="flex h-[19px] items-center justify-between border-b border-[#f8cbb5] pl-[2px]">图片 26<button aria-label="隐藏 图片 26"><svg class="h-[9px] w-4"><use href="#eye"/></svg></button></li>
      <li class="flex h-[19px] items-center justify-between border-b border-[#f8cbb5] pl-[2px]">图片 25<button aria-label="隐藏 图片 25"><svg class="h-[9px] w-4"><use href="#eye"/></svg></button></li>
    </ul>
  </aside>
</main>
</body>
</html>
